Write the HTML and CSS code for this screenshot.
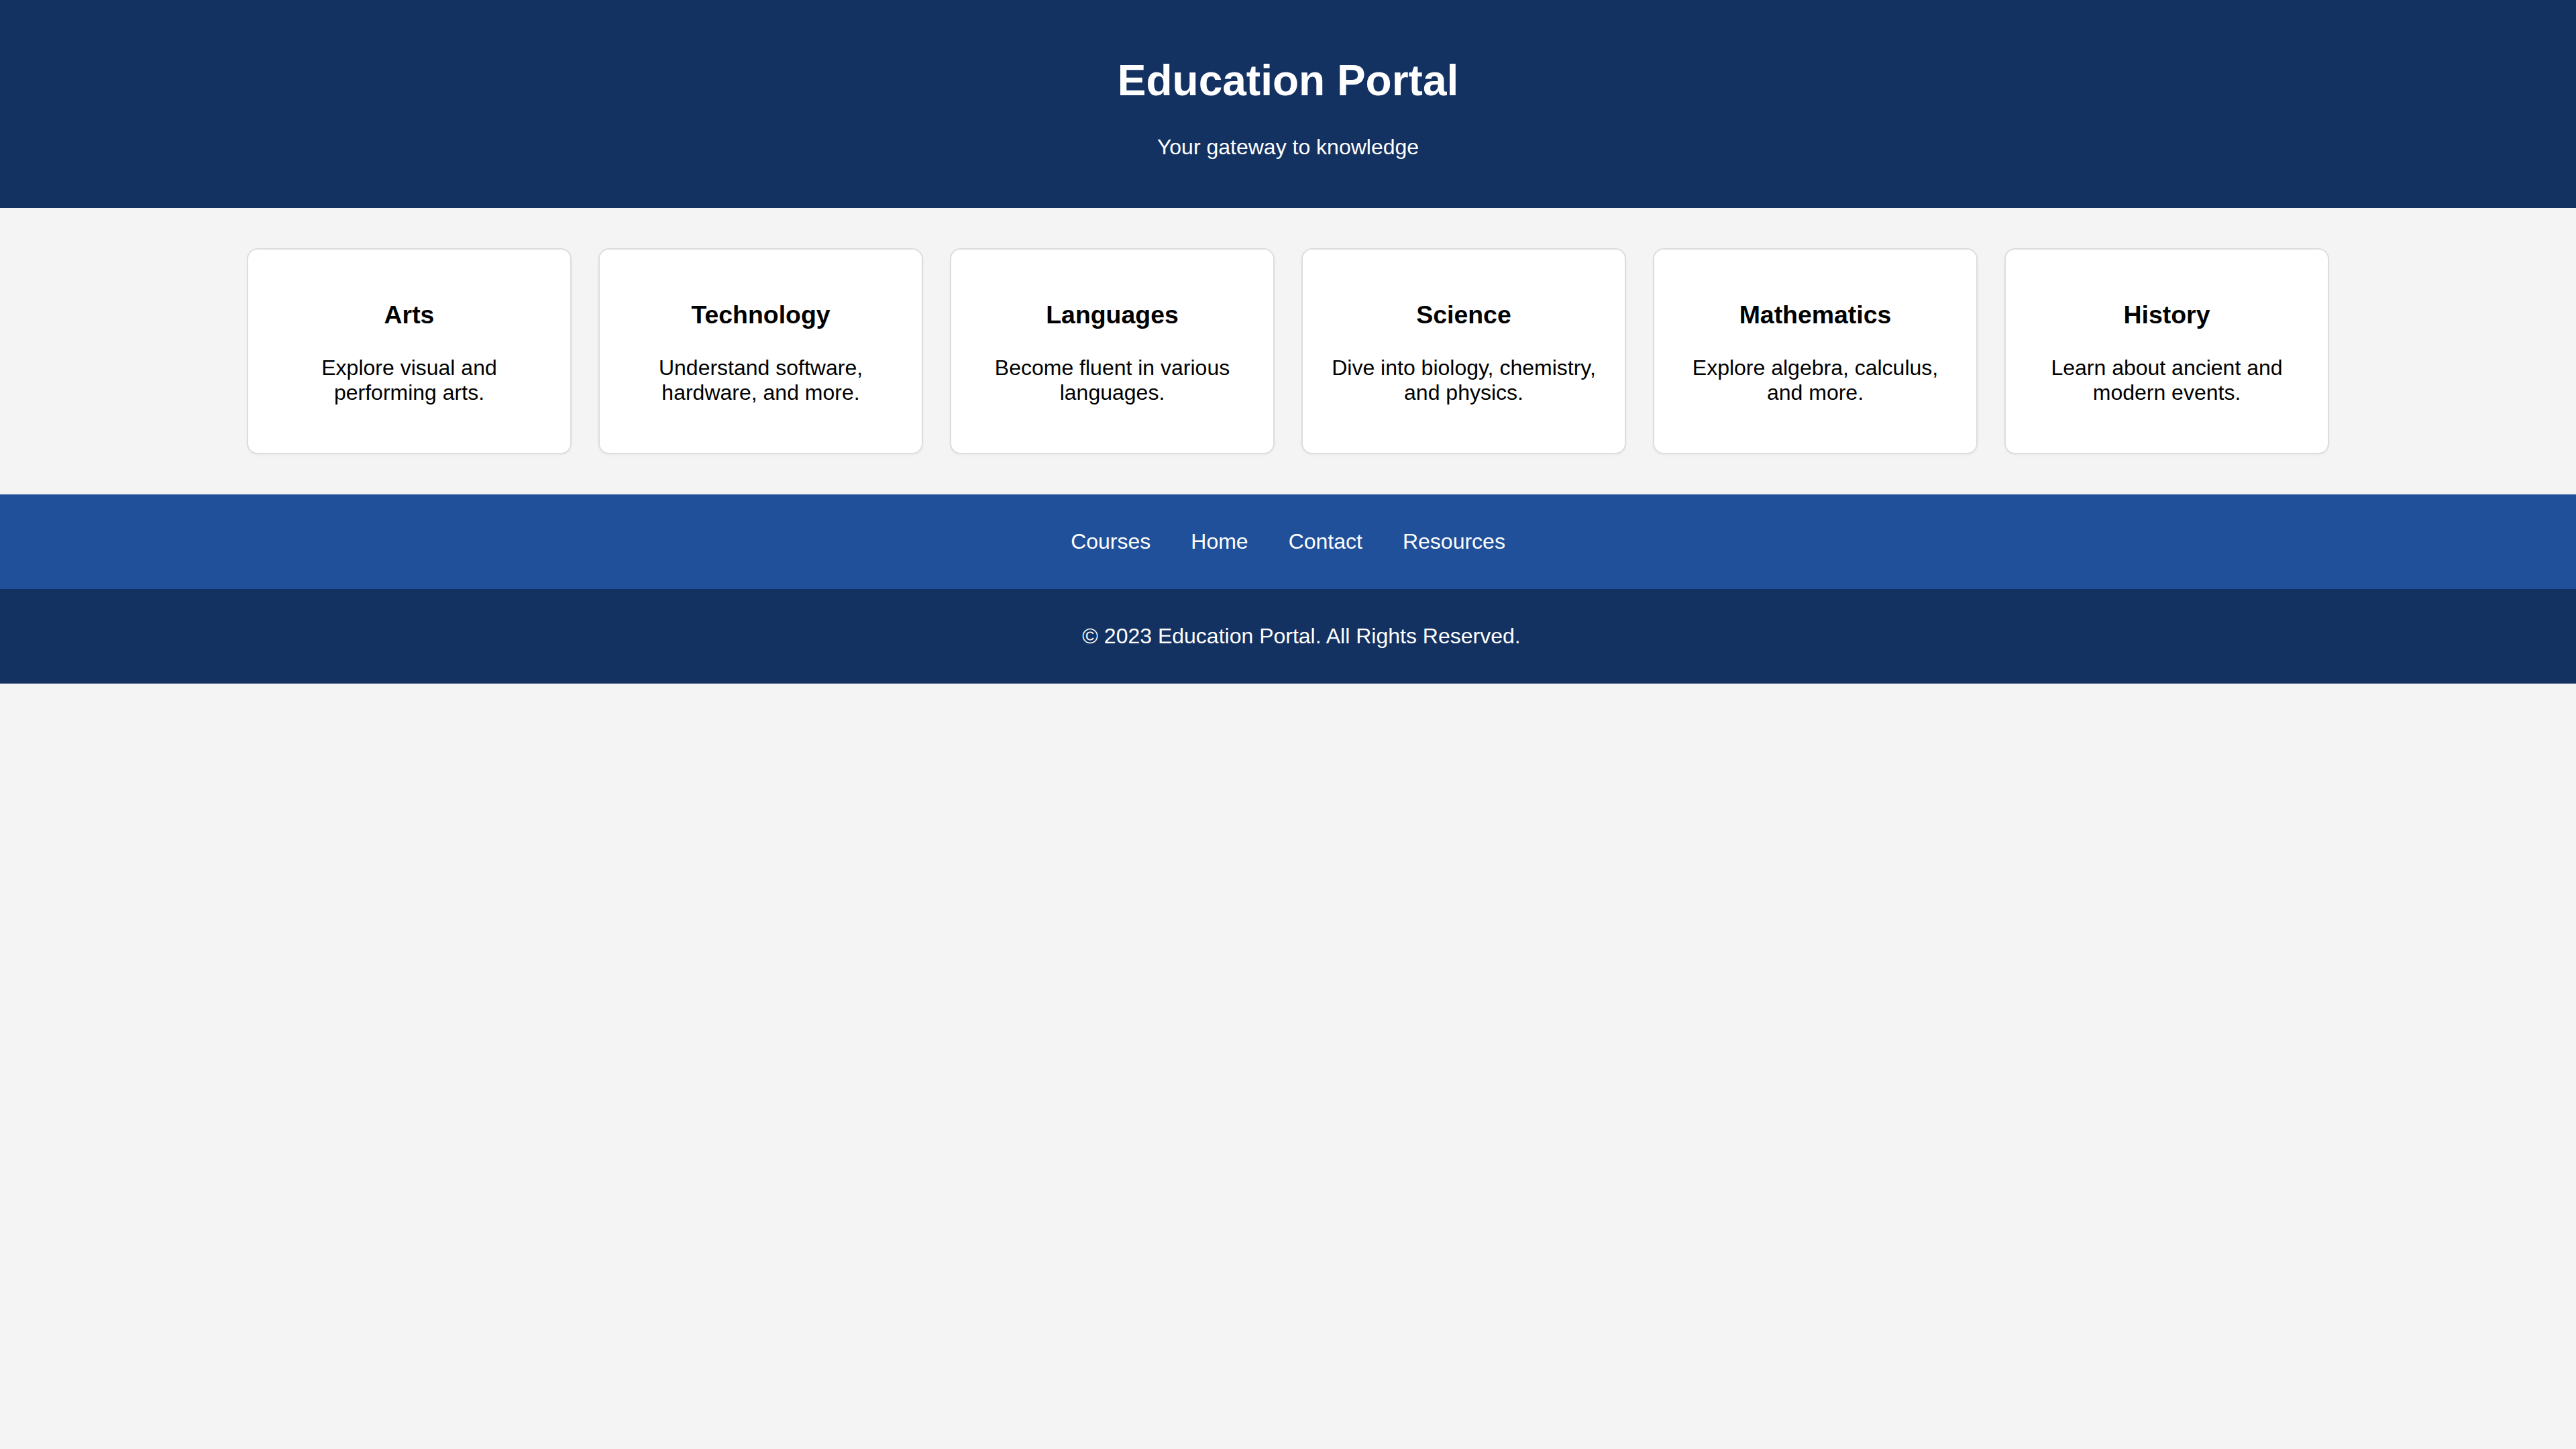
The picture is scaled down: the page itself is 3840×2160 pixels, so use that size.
FILE: index.html
```html
<!DOCTYPE html>
<html lang="en">
<head>
<meta charset="utf-8">
<title>Education Portal</title>
<link rel="stylesheet" href="styles.css">
</head>
<body>
<header class="site-header">
  <h1 class="site-title">Education Portal</h1>
  <p class="site-tagline">Your gateway to knowledge</p>
</header>
<main class="categories">
  <section class="card">
    <h3 class="card-title">Arts</h3>
    <p class="card-text">Explore visual and performing arts.</p>
  </section>
  <section class="card">
    <h3 class="card-title">Technology</h3>
    <p class="card-text">Understand software, hardware, and more.</p>
  </section>
  <section class="card">
    <h3 class="card-title">Languages</h3>
    <p class="card-text">Become fluent in various languages.</p>
  </section>
  <section class="card">
    <h3 class="card-title">Science</h3>
    <p class="card-text">Dive into biology, chemistry, and physics.</p>
  </section>
  <section class="card">
    <h3 class="card-title">Mathematics</h3>
    <p class="card-text">Explore algebra, calculus, and more.</p>
  </section>
  <section class="card">
    <h3 class="card-title">History</h3>
    <p class="card-text">Learn about ancient and modern events.</p>
  </section>
</main>
<nav class="site-nav">
  <ul class="nav-list">
    <li><a class="nav-link" href="#">Courses</a></li>
    <li><a class="nav-link" href="#">Home</a></li>
    <li><a class="nav-link" href="#">Contact</a></li>
    <li><a class="nav-link" href="#">Resources</a></li>
  </ul>
</nav>
<footer class="site-footer">
  <p class="footer-text">&copy; 2023 Education Portal. All Rights Reserved.</p>
</footer>
</body>
</html>
```
FILE: styles.css
```css
html, body {
  margin: 0;
  padding: 0;
}
body {
  background: #f4f4f4;
  color: #000;
  font-family: "Liberation Sans", Arial, Helvetica, sans-serif;
  font-size: 32px;
}
.site-header {
  background: #133161;
  color: #fff;
  text-align: center;
  padding: 40px 0;
}
.site-title {
  font-size: 64px;
  margin: 43px 0 43.5px;
}
.site-tagline {
  margin: 0 0 32px;
}
.categories {
  display: flex;
  flex-wrap: wrap;
  justify-content: center;
  gap: 40px;
  padding: 60px 0;
}
.card {
  width: 400px;
  padding: 40px;
  background: #fff;
  border: 2px solid #ddd;
  border-radius: 16px;
  box-shadow: 0 2px 4px rgba(0, 0, 0, 0.04);
  text-align: center;
}
.card-title {
  font-size: 37.44px;
  margin: 36.5px 0 39px;
}
.card-text {
  margin: 0 0 31px;
}
.site-nav {
  background: #205099;
  padding: 20px 0;
}
.nav-list {
  list-style: none;
  margin: 32px 0;
  padding: 0;
  display: flex;
  justify-content: center;
  gap: 60px;
}
.nav-link {
  color: #fff;
  text-decoration: none;
}
.site-footer {
  background: #133161;
  color: #fff;
  text-align: center;
  padding: 20px 0 20px 40px;
}
.footer-text {
  margin: 32px 0;
}
```
